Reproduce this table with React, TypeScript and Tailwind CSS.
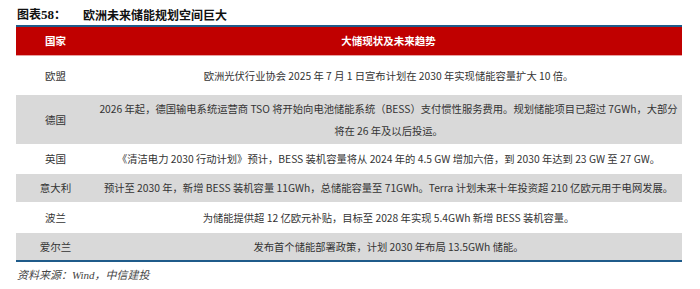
import React from "react";

const rows: { c: string; t: React.ReactNode; gray: boolean; h: string }[] = [
  { c: "欧盟", t: "欧洲光伏行业协会 2025 年 7 月 1 日宣布计划在 2030 年实现储能容量扩大 10 倍。", gray: false, h: "h-[39px]" },
  {
    c: "德国",
    t: (
      <>
        <span className="block whitespace-nowrap">2026 年起，德国输电系统运营商 TSO 将开始向电池储能系统（BESS）支付惯性服务费用。规划储能项目已超过 7GWh，大部分</span>
        <span className="block">将在 26 年及以后投运。</span>
      </>
    ),
    gray: true,
    h: "h-[49px]",
  },
  { c: "英国", t: "《清洁电力 2030 行动计划》预计，BESS 装机容量将从 2024 年的 4.5 GW 增加六倍，到 2030 年达到 23 GW 至 27 GW。", gray: false, h: "h-[30px]" },
  { c: "意大利", t: "预计至 2030 年，新增 BESS 装机容量 11GWh，总储能容量至 71GWh。Terra 计划未来十年投资超 210 亿欧元用于电网发展。", gray: true, h: "h-[28px]" },
  { c: "波兰", t: "为储能提供超 12 亿欧元补贴，目标至 2028 年实现 5.4GWh 新增 BESS 装机容量。", gray: false, h: "h-[31px]" },
  { c: "爱尔兰", t: "发布首个储能部署政策，计划 2030 年布局 13.5GWh 储能。", gray: true, h: "h-[27px]" },
];

export default function App() {
  return (
    <div className="w-[700px] h-[289px] bg-white pl-[16px] pt-[6px]" style={{ fontFamily: '"Noto Sans CJK SC", sans-serif' }}>
      <div className="flex items-center h-[18px] text-[12px] font-bold text-[#111]">
        <span className="ml-[1px]">
          图表<span style={{ fontFamily: '"Liberation Serif", serif' }} className="text-[13px]">58</span>：
        </span>
        <span className="ml-[17px]">欧洲未来储能规划空间巨大</span>
      </div>
      <div className="w-[666px] mt-[1px] border-t-2 border-[#1f5b8a]">
        <div className="grid grid-cols-[79px_1fr] h-[29px] bg-[#c00000] text-white font-bold text-[10.5px] items-center text-center border-b border-[#e8a0a0]">
          <div>国家</div>
          <div>大储现状及未来趋势</div>
        </div>
        {rows.map((r) => (
          <div
            key={r.c}
            className={`grid grid-cols-[79px_1fr] items-center text-center text-[10.3px] text-[#333] ${r.h} ${r.gray ? "bg-[#d9d9d9]" : "bg-white"}`}
          >
            <div className="text-[10.5px]">{r.c}</div>
            <div className="leading-[22px]">{r.t}</div>
          </div>
        ))}
        <div className="h-[2px] bg-[#1f5b8a]" />
      </div>
      <div
        className="mt-[5px] ml-[1px] text-[11px] italic text-[#444]"
        style={{ fontFamily: '"Liberation Serif", "Noto Sans CJK SC", serif' }}
      >
        资料来源：Wind，中信建投
      </div>
    </div>
  );
}
